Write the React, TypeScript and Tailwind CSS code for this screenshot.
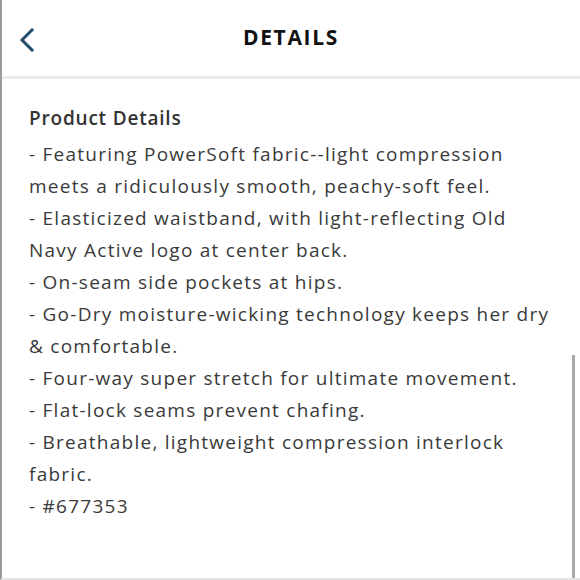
import React from "react";

const lines = [
  "- Featuring PowerSoft fabric--light compression",
  "meets a ridiculously smooth, peachy-soft feel.",
  "- Elasticized waistband, with light-reflecting Old",
  "Navy Active logo at center back.",
  "- On-seam side pockets at hips.",
  "- Go-Dry moisture-wicking technology keeps her dry",
  "& comfortable.",
  "- Four-way super stretch for ultimate movement.",
  "- Flat-lock seams prevent chafing.",
  "- Breathable, lightweight compression interlock",
  "fabric.",
  "- #677353",
];

export default function App() {
  return (
    <div
      className="relative w-[580px] h-[580px] bg-white overflow-hidden border-l-2 border-b-2 border-[#9a9a9a] border-b-[#e4e4e4]"
      style={{ fontFamily: "'Open Sans', 'Liberation Sans', sans-serif" }}
    >
      <header className="h-[76px] flex items-center relative">
        <button className="absolute left-[16px] top-[27px] w-[18px] h-[26px] flex items-center justify-center">
          <svg width="16" height="24" viewBox="0 0 16 24" fill="none">
            <path d="M13 2 L3 12 L13 22" stroke="#1f4e70" strokeWidth="3" strokeLinecap="square" />
          </svg>
        </button>
        <h1 className="flex-1 text-center text-[21px] font-bold tracking-[0.08em] text-[#111]">
          DETAILS
        </h1>
      </header>
      <div className="h-[3px] bg-[#ebebef]" />
      <div className="pl-[27px] pt-[23px] text-[#3a3a3a] text-[19px] leading-[32px] tracking-[1.25px]">
        <div className="font-semibold text-[#333] mb-[4px] tracking-[0.8px]">Product Details</div>
        {lines.map((l, i) => (
          <div key={i} className="whitespace-nowrap">{l}</div>
        ))}
      </div>
      <div className="absolute right-[5px] top-[355px] w-[3px] h-[225px] bg-[#aaaaaa]" />
    </div>
  );
}
